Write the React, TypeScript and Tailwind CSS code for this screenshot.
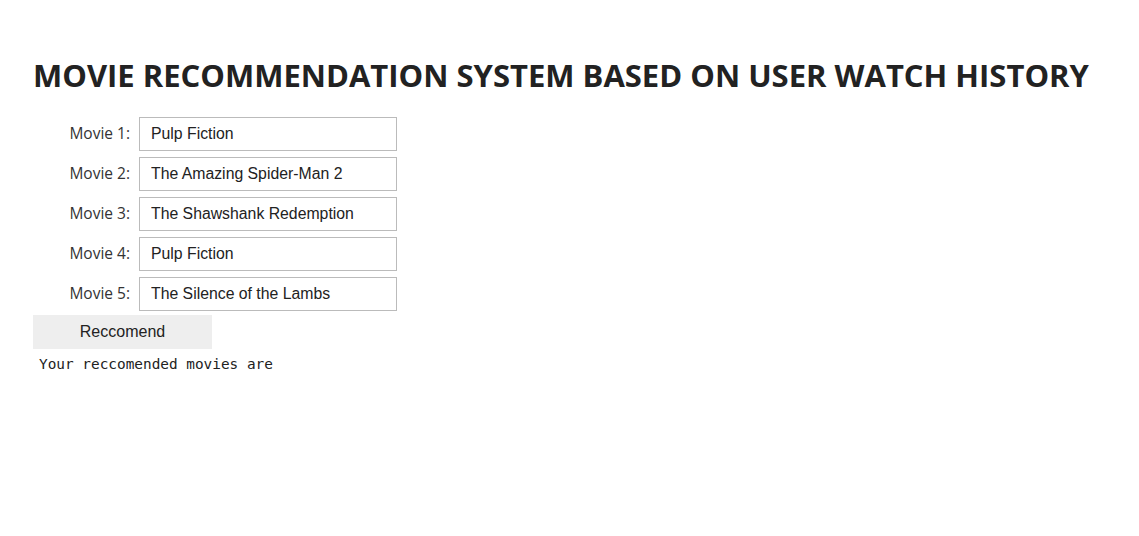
import React from "react";

const movies = [
  "Pulp Fiction",
  "The Amazing Spider-Man 2",
  "The Shawshank Redemption",
  "Pulp Fiction",
  "The Silence of the Lambs",
];

export default function App() {
  return (
    <div className="min-h-[536px] w-[1139px] bg-white pl-[33px] pt-[55px]">
      <h1 className="font-['Open_Sans','Noto_Sans',sans-serif] text-[31px] font-bold leading-[40px] text-[#222]">
        MOVIE RECOMMENDATION SYSTEM BASED ON USER WATCH HISTORY
      </h1>
      <div className="mt-[22px] flex flex-col gap-[6px]">
        {movies.map((m, i) => (
          <div key={i} className="flex items-center">
            <label className="w-[106px] pr-[9px] text-right font-['Open_Sans','Noto_Sans',sans-serif] text-[15.5px] text-[#333]">
              Movie {i + 1}:
            </label>
            <input
              defaultValue={m}
              className="h-[34px] w-[258px] border border-[#bbb] bg-white px-[11px] font-['Liberation_Sans',Arial,sans-serif] text-[15.8px] text-[#222] outline-none"
            />
          </div>
        ))}
      </div>
      <button className="mt-[4px] h-[34px] w-[179px] bg-[#eee] font-['Liberation_Sans',Arial,sans-serif] text-[16px] text-[#222]">
        Reccomend
      </button>
      <pre className="mt-[5px] pl-[6px] font-['DejaVu_Sans_Mono','Liberation_Mono',monospace] text-[14.4px] leading-[20px] text-[#222]">
        Your reccomended movies are
      </pre>
    </div>
  );
}
